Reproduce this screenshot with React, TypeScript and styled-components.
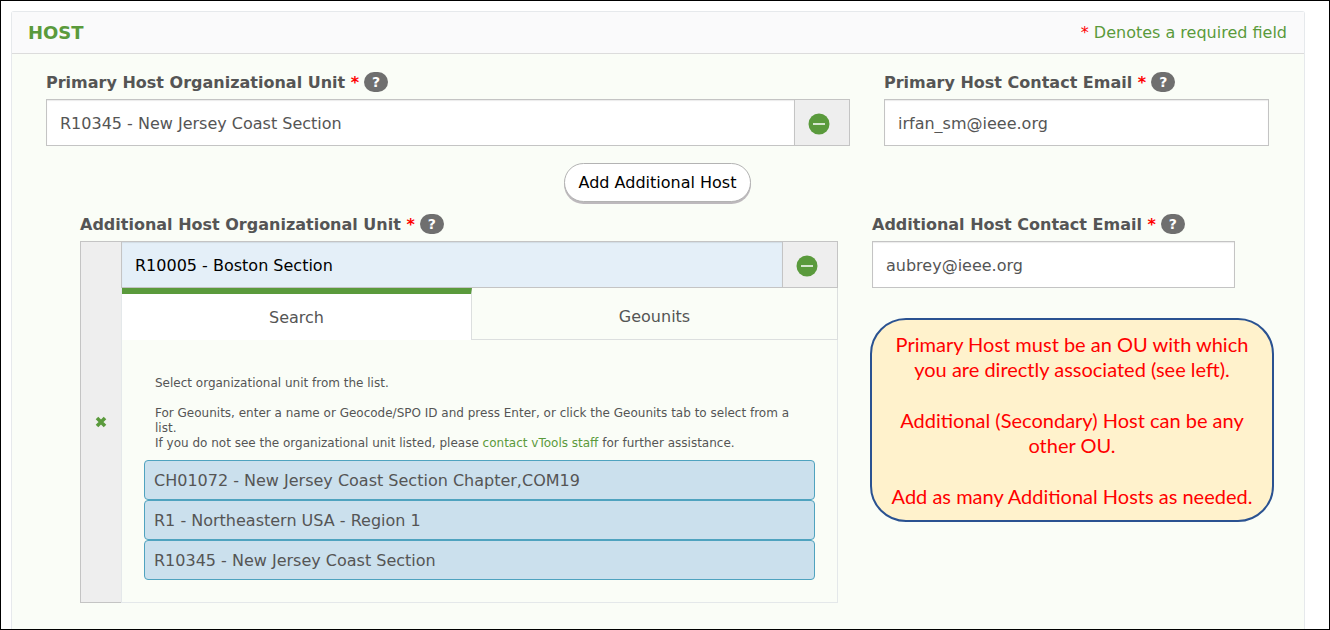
import React from "react";
import styled, { createGlobalStyle } from "styled-components";

const GlobalStyle = createGlobalStyle`
  * { box-sizing: border-box; }
  body {
    margin: 0;
    background: #fff;
    color: #555;
    font-family: "DejaVu Sans", Verdana, sans-serif;
    font-size: 16px;
  }
  button, input { font: inherit; color: inherit; }
`;

const green = "#5a9a3c";
const fieldBorder = "#c4c4c4";
const faintBorder = "#e4e8ea";

const Frame = styled.main`
  display: flex;
  min-height: 100vh;
  padding: 10px 24px 0 10px;
  border: 1px solid #000;
`;

const Panel = styled.section`
  flex: 1;
  min-width: 0;
  border: 1px solid #e6e9ec;
  border-bottom: 0;
  border-radius: 3px 3px 0 0;
  background: #fafdf7;
`;

const PanelHeader = styled.header`
  display: flex;
  align-items: center;
  justify-content: space-between;
  height: 42px;
  padding: 0 17px 0 16px;
  border-bottom: 1px solid #dcdcdc;
  background: #fafafb;
  color: ${green};
`;

const Title = styled.h2`
  margin: 0;
  font-size: 18px;
  font-weight: bold;
`;

const Note = styled.p`
  margin: 0;
`;

const Star = styled.span`
  color: #f00;
`;

const Body = styled.div`
  padding: 14px 35px 24px 34px;
`;

const Row = styled.div<{ $nested?: boolean }>`
  display: grid;
  grid-template-columns: ${(p) => (p.$nested ? "758fr 363fr" : "804fr 385fr")};
  gap: 34px;
  padding: ${(p) => (p.$nested ? "0 34px" : "0")};
`;

const Column = styled.div`
  min-width: 0;
`;

const LabelRow = styled.div`
  display: flex;
  align-items: center;
  gap: 5px;
  height: 28px;
  margin-bottom: 3px;
  white-space: nowrap;
`;

const Label = styled.label`
  font-weight: bold;
`;

const HelpButton = styled.button`
  width: 24px;
  height: 20px;
  padding: 0;
  border: 0;
  border-radius: 10px;
  background: #6f6f6f;
  color: #fff;
  font-size: 14px;
  font-weight: bold;
  line-height: 20px;
`;

const Group = styled.div`
  display: flex;
  height: 47px;
  border: 1px solid ${fieldBorder};
`;

const TextInput = styled.input<{ $active?: boolean }>`
  flex: 1;
  min-width: 0;
  padding: 2px 13px 0;
  border: 0;
  outline: 0;
  background: ${(p) => (p.$active ? "#e4eff8" : "#fff")};
  box-shadow: inset 0 1px 1px rgba(0, 0, 0, 0.08);
  color: ${(p) => (p.$active ? "#000" : "#555")};
`;

const RemoveButton = styled.button`
  display: flex;
  align-items: center;
  width: 55px;
  padding: 2px 0 0 13px;
  border: 0;
  border-left: 1px solid ${fieldBorder};
  background: #eee;
`;

const AddBar = styled.div`
  display: flex;
  justify-content: center;
  padding: 17px 0 8px;
`;

const AddButton = styled.button`
  height: 39px;
  padding: 0 14px;
  border: 1px solid #b3b3b3;
  border-radius: 20px;
  background: #fff;
  box-shadow: 0 2px 0 #bdb9bd;
  color: #000;
`;

const Widget = styled.div`
  display: flex;
`;

const Gutter = styled.div`
  display: flex;
  flex: 0 0 41px;
  align-items: center;
  justify-content: center;
  border: 1px solid ${fieldBorder};
  border-right: 0;
  background: #eee;
`;

const CloseButton = styled.button`
  display: flex;
  padding: 4px;
  border: 0;
  background: none;
`;

const WidgetMain = styled.div`
  flex: 1;
  min-width: 0;
`;

const Tabs = styled.div`
  display: grid;
  grid-template-columns: 350fr 366fr;
  height: 52px;
  border-left: 1px solid ${faintBorder};
`;

const Tab = styled.button<{ $selected?: boolean }>`
  padding: ${(p) => (p.$selected ? "0" : "6px 0 0")};
  border: solid #dcdfdf;
  border-width: ${(p) => (p.$selected ? "6px 1px 0 0" : "0 1px 1px 0")};
  border-top-color: ${green};
  background: ${(p) => (p.$selected ? "#fff" : "transparent")};
`;

const TabPanel = styled.div`
  padding: 36px 22px 22px;
  border: 1px solid ${faintBorder};
  border-top: 0;
`;

const HelpText = styled.p`
  margin: 0 11px 15px;
  font-size: 12px;
  line-height: 15px;
  &:last-of-type { margin-bottom: 9px; }
`;

const Link = styled.a`
  color: ${green};
  text-decoration: none;
`;

const UnitList = styled.ul`
  margin: 0;
  padding: 0;
  list-style: none;
`;

const UnitButton = styled.button`
  display: block;
  width: 100%;
  height: 40px;
  padding: 0 9px;
  border: 1px solid #4fa3bf;
  border-radius: 4px;
  background: #cbe0ed;
  text-align: left;
`;

const Callout = styled.aside`
  display: flex;
  flex-direction: column;
  gap: 26px;
  margin: 30px -39px 0 -2px;
  padding: 12px 16px 11px;
  border: 2px solid #2a5291;
  border-radius: 36px;
  background: #fff2cc;
  color: #f00;
  font-family: Lato, Calibri, sans-serif;
  font-size: 20px;
  line-height: 25px;
  text-align: center;
`;

const CalloutText = styled.p`
  margin: 0;
`;

const MinusIcon = () => (
  <svg width="22" height="22" viewBox="0 0 22 22" aria-hidden="true">
    <circle cx="11" cy="11" r="10.5" fill={green} />
    <path d="M5 11h12" stroke="#fff" strokeWidth="1.5" />
  </svg>
);

const CrossIcon = () => (
  <svg width="12" height="12" viewBox="0 0 12 12" aria-hidden="true">
    <path d="M2 2l8 8M10 2L2 10" stroke={green} strokeWidth="3.6" />
  </svg>
);

const FieldLabel = ({ htmlFor, children }: { htmlFor: string; children: string }) => (
  <LabelRow>
    <Label htmlFor={htmlFor}>
      {children} <Star>*</Star>
    </Label>
    <HelpButton type="button" aria-label={`Help for ${children}`}>?</HelpButton>
  </LabelRow>
);

const units = [
  "CH01072 - New Jersey Coast Section Chapter,COM19",
  "R1 - Northeastern USA - Region 1",
  "R10345 - New Jersey Coast Section",
];

export default function App() {
  return (
    <>
      <GlobalStyle />
      <Frame>
        <Panel>
          <PanelHeader>
            <Title>HOST</Title>
            <Note>
              <Star>*</Star> Denotes a required field
            </Note>
          </PanelHeader>
          <Body>
            <Row>
              <Column>
                <FieldLabel htmlFor="primary-unit">Primary Host Organizational Unit</FieldLabel>
                <Group>
                  <TextInput id="primary-unit" defaultValue="R10345 - New Jersey Coast Section" />
                  <RemoveButton type="button" aria-label="Remove primary host">
                    <MinusIcon />
                  </RemoveButton>
                </Group>
              </Column>
              <Column>
                <FieldLabel htmlFor="primary-email">Primary Host Contact Email</FieldLabel>
                <Group>
                  <TextInput id="primary-email" type="email" defaultValue="irfan_sm@ieee.org" />
                </Group>
              </Column>
            </Row>
            <AddBar>
              <AddButton type="button">Add Additional Host</AddButton>
            </AddBar>
            <Row $nested>
              <Column>
                <FieldLabel htmlFor="additional-unit">Additional Host Organizational Unit</FieldLabel>
                <Widget>
                  <Gutter>
                    <CloseButton type="button" aria-label="Close">
                      <CrossIcon />
                    </CloseButton>
                  </Gutter>
                  <WidgetMain>
                    <Group>
                      <TextInput id="additional-unit" $active defaultValue="R10005 - Boston Section" />
                      <RemoveButton type="button" aria-label="Remove additional host">
                        <MinusIcon />
                      </RemoveButton>
                    </Group>
                    <Tabs role="tablist">
                      <Tab type="button" role="tab" aria-selected $selected>Search</Tab>
                      <Tab type="button" role="tab" aria-selected={false}>Geounits</Tab>
                    </Tabs>
                    <TabPanel role="tabpanel">
                      <HelpText>Select organizational unit from the list.</HelpText>
                      <HelpText>
                        For Geounits, enter a name or Geocode/SPO ID and press Enter, or click the
                        Geounits tab to select from a list.
                        <br />
                        If you do not see the organizational unit listed, please{" "}
                        <Link href="#contact">contact vTools staff</Link> for further assistance.
                      </HelpText>
                      <UnitList>
                        {units.map((unit) => (
                          <li key={unit}>
                            <UnitButton type="button">{unit}</UnitButton>
                          </li>
                        ))}
                      </UnitList>
                    </TabPanel>
                  </WidgetMain>
                </Widget>
              </Column>
              <Column>
                <FieldLabel htmlFor="additional-email">Additional Host Contact Email</FieldLabel>
                <Group>
                  <TextInput id="additional-email" type="email" defaultValue="aubrey@ieee.org" />
                </Group>
                <Callout>
                  <CalloutText>
                    Primary Host must be an OU with which you are directly associated (see left).
                  </CalloutText>
                  <CalloutText>Additional (Secondary) Host can be any other OU.</CalloutText>
                  <CalloutText>Add as many Additional Hosts as needed.</CalloutText>
                </Callout>
              </Column>
            </Row>
          </Body>
        </Panel>
      </Frame>
    </>
  );
}
